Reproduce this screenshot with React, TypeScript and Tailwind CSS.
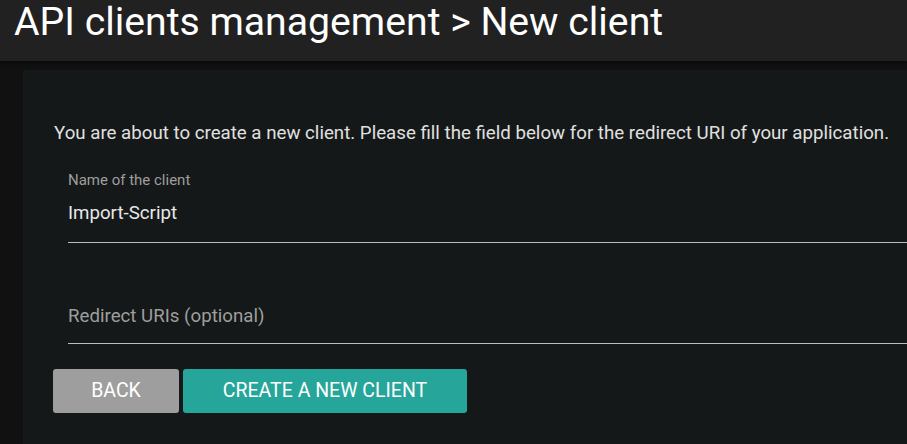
export default function App() {
  return (
    <div className="w-[907px] h-[444px] overflow-hidden bg-[#111111] font-['Roboto',sans-serif]">
      <div className="h-[61px] bg-[#212121] pl-[14px] shadow-[0_2px_4px_rgba(0,0,0,0.5)] relative z-10">
        <h1 className="text-[39.2px] leading-[44px] text-white whitespace-nowrap font-normal">
          API clients management &gt; New client
        </h1>
      </div>
      <div className="ml-[23px] mt-[9px] w-[1000px] h-[400px] bg-[#151818] pl-[31px] pt-[51px]">
        <p className="text-[18.7px] leading-[24px] text-[#e0e0e0] whitespace-nowrap">
          You are about to create a new client. Please fill the field below for the redirect URI of your application.
        </p>
        <div className="ml-[14px] mt-[26px]">
          <div className="text-[15px] leading-[18px] text-[#9e9e9e]">Name of the client</div>
          <div className="mt-[12px] h-[42px] border-b border-[#bdbdbd] text-[18.7px] leading-[24px] text-[#e8e8e8]">
            Import-Script
          </div>
          <div className="mt-[61px] h-[40px] border-b border-[#bdbdbd] text-[18.7px] leading-[24px] text-[#9e9e9e]">
            Redirect URIs (optional)
          </div>
        </div>
        <div className="mt-[25px] -ml-[1px] flex gap-[4px]">
          <button className="w-[126px] h-[44px] rounded-[3px] bg-[#9e9e9e] text-white text-[19.5px] uppercase">
            Back
          </button>
          <button className="w-[284px] h-[44px] rounded-[3px] bg-[#26a69a] text-white text-[19.5px] uppercase">
            Create a new client
          </button>
        </div>
      </div>
    </div>
  );
}
